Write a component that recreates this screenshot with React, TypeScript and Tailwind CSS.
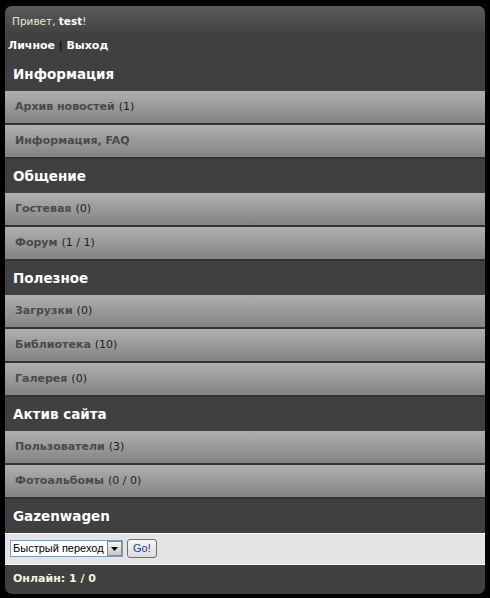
import React from 'react';

type Item = { label: string; count: string };
type Section = { title: string; items: Item[] };

const sections: Section[] = [
    {
        title: 'Информация',
        items: [
            { label: 'Архив новостей', count: '(1)' },
            { label: 'Информация, FAQ', count: '' },
        ],
    },
    {
        title: 'Общение',
        items: [
            { label: 'Гостевая', count: '(0)' },
            { label: 'Форум', count: '(1 / 1)' },
        ],
    },
    {
        title: 'Полезное',
        items: [
            { label: 'Загрузки', count: '(0)' },
            { label: 'Библиотека', count: '(10)' },
            { label: 'Галерея', count: '(0)' },
        ],
    },
    {
        title: 'Актив сайта',
        items: [
            { label: 'Пользователи', count: '(3)' },
            { label: 'Фотоальбомы', count: '(0 / 0)' },
        ],
    },
];

const font = "font-['DejaVu_Sans',Verdana,sans-serif]";

export default function App() {
    return (
        <div className={`min-h-[598px] bg-black p-[5px] pt-[6px] ${font}`}>
            <div className="rounded-[7px] bg-[#404040] overflow-hidden">
                {/* Greeting */}
                <div className="bg-gradient-to-b from-[#5a5a5a] to-[#404040] h-[30px] px-[7px] pt-[8px] text-[10.5px] text-[#e8e8d8]">
                    Привет, <b className="text-white">test</b>!
                </div>
                <div className="px-[3px] h-[21px] text-[11px] font-bold text-white leading-[20px]">
                    Личное <span className="text-black font-normal">|</span> Выход
                </div>

                {sections.map((s) => (
                    <div key={s.title}>
                        <div className="h-[34px] flex items-center px-[8px] text-[13.5px] font-bold text-white">
                            {s.title}
                        </div>
                        {s.items.map((it) => (
                            <div
                                key={it.label}
                                className="h-[34px] border-b-2 border-[#333] bg-gradient-to-b from-[#b0b0b0] to-[#838383] flex items-center px-[10px] text-[11px]"
                            >
                                <span className="font-bold text-[#4a4a4a]">{it.label}</span>
                                {it.count && <span className="ml-[4px] text-[#1c1c2c]">{it.count}</span>}
                            </div>
                        ))}
                    </div>
                ))}

                <div className="h-[34px] flex items-center px-[8px] text-[13.5px] font-bold text-white">
                    Gazenwagen
                </div>

                {/* Quick jump form */}
                <div className="h-[32px] bg-[#e4e4e4] border-y border-white flex items-center gap-[4px] px-[5px] pb-[1px]">
                    <div className="flex items-center h-[17px] w-[113px] bg-white border border-[#7f9db9] font-['Liberation_Sans',Arial,sans-serif] text-[11px] text-black overflow-hidden">
                        <span className="flex-1 pl-[2px] leading-none whitespace-nowrap overflow-hidden">Быстрый переход</span>
                        <span className="w-[15px] h-[15px] shrink-0 bg-gradient-to-b from-[#f4f4f4] to-[#c8c8c8] border border-[#888] flex items-center justify-center">
                            <svg width="7" height="4" viewBox="0 0 7 4">
                                <path d="M0 0h7L3.5 4z" fill="#000" />
                            </svg>
                        </span>
                    </div>
                    <button className="h-[19px] px-[5px] rounded-[3px] border border-[#707070] bg-gradient-to-b from-[#f6f6f6] to-[#dcdcdc] font-['Liberation_Sans',Arial,sans-serif] text-[11px] text-[#1e3c8c] leading-none">
                        Go!
                    </button>
                </div>

                <div className="h-[29px] flex items-center px-[8px] text-[11px] font-bold text-[#f4f4dc]">
                    Онлайн: 1 / 0
                </div>
            </div>
        </div>
    );
}
